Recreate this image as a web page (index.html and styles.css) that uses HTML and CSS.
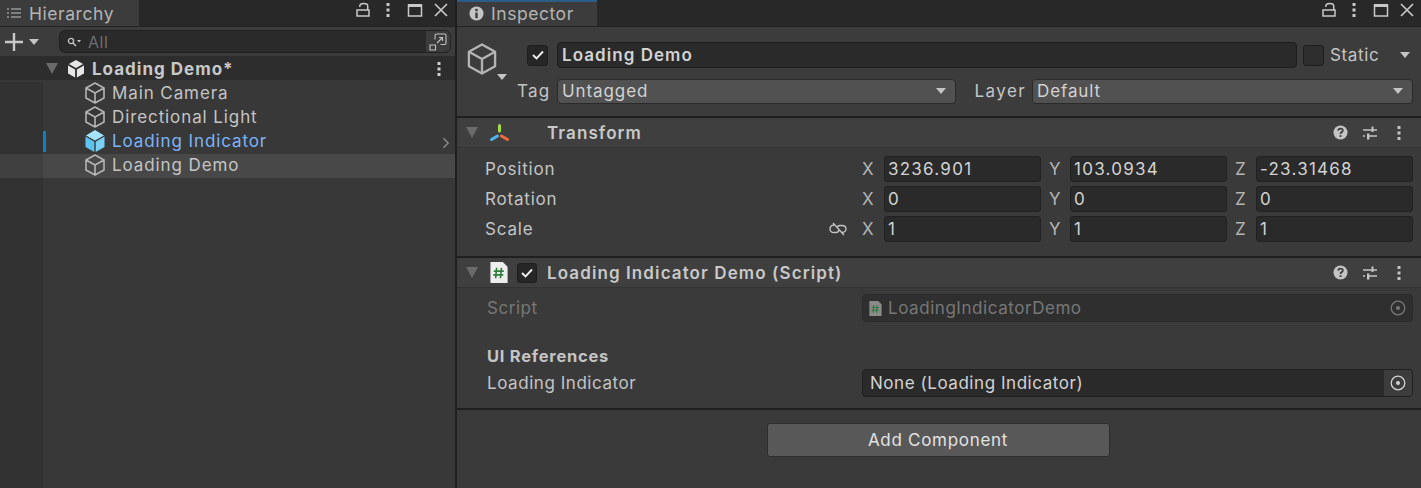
FILE: index.html
```html
<!DOCTYPE html>
<html>
<head>
  <meta charset="UTF-8" />
  <title>Hierarchy / Inspector</title>
  <link rel="stylesheet" href="styles.css">
</head>
<body>

<svg class="defs" width="0" height="0">
  <symbol id="cube" viewBox="0 0 22 24">
    <path d="M11 2 L20 7 V17 L11 22 L2 17 V7 Z M2 7 L11 12 L20 7 M11 12 V22" fill="none" stroke="currentColor" stroke-width="1.6" stroke-linejoin="round"/>
  </symbol>
  <symbol id="lock" viewBox="0 0 16 16">
    <path d="M2 8 H14 V14 H2 Z M12.7 8 V4 Q12.7 1.5 8.7 1.5 Q5 1.5 4.8 4 V5" fill="none" stroke="currentColor" stroke-width="1.5"/>
  </symbol>
  <symbol id="max" viewBox="0 0 16 16">
    <path d="M1.5 3 H14.5 V14 H1.5 Z" fill="none" stroke="currentColor" stroke-width="1.5"/>
    <rect x="1" y="2" width="14" height="3" fill="currentColor"/>
  </symbol>
  <symbol id="close" viewBox="0 0 16 16">
    <path d="M2 2 L14 14 M14 2 L2 14" stroke="currentColor" stroke-width="1.7"/>
  </symbol>
  <symbol id="dots" viewBox="0 0 4 16">
    <rect x="0.5" y="1" width="3" height="3" fill="currentColor"/>
    <rect x="0.5" y="6.5" width="3" height="3" fill="currentColor"/>
    <rect x="0.5" y="12" width="3" height="3" fill="currentColor"/>
  </symbol>
  <symbol id="help" viewBox="0 0 16 16">
    <circle cx="8" cy="8" r="7.5" fill="currentColor"/>
    <path d="M5.5 6 Q5.6 3.8 8 3.8 Q10.5 3.8 10.5 5.8 Q10.5 7 9.2 7.6 Q8 8.2 8 9.6" fill="none" stroke="#3e3e3e" stroke-width="1.8"/>
    <rect x="7" y="10.8" width="2" height="2" fill="#3e3e3e"/>
  </symbol>
  <symbol id="sliders" viewBox="0 0 16 16">
    <path d="M1 5 H15 M1 11 H3 M6 11 H15" stroke="currentColor" stroke-width="1.4"/>
    <rect x="9.5" y="1.5" width="2" height="5.5" fill="currentColor"/>
    <rect x="5" y="8.5" width="2.4" height="6" fill="currentColor"/>
  </symbol>
  <symbol id="target" viewBox="0 0 16 16">
    <circle cx="8" cy="8" r="6.8" fill="none" stroke="currentColor" stroke-width="1.3"/>
    <circle cx="8" cy="8" r="2" fill="currentColor"/>
  </symbol>
  <symbol id="script" viewBox="0 0 18 22">
    <path d="M0 0 H13 L18 5 V22 H0 Z" fill="currentColor"/>
    <path d="M6.5 6 L5.5 17 M11.5 6 L10.5 17 M3.5 9.5 H14 M3 13.5 H13.5" stroke="#2f7d3a" stroke-width="1.7" fill="none"/>
  </symbol>
</svg>

<div class="editor">

  <div class="panel hierarchy">
    <div class="tabbar">
      <div class="tab tab-h">
        <svg class="tab-list" width="14" height="12" viewBox="0 0 14 12"><path d="M4 2 H14 M4 6 H14 M4 10 H14" stroke="#c4c4c4" stroke-width="1.2"/><path d="M0 2 H2 M0 6 H2 M0 10 H2" stroke="#c4c4c4" stroke-width="1.2"/></svg>
        <span>Hierarchy</span>
      </div>
      <div class="tab-tools">
        <svg class="ico-lock"><use href="#lock"/></svg>
        <svg class="ico-dots"><use href="#dots"/></svg>
        <svg class="ico-max"><use href="#max"/></svg>
        <svg class="ico-close"><use href="#close"/></svg>
      </div>
    </div>

    <div class="toolbar">
      <div class="add">
        <svg width="18" height="18" viewBox="0 0 18 18"><path d="M9 0 V18 M0 9 H18" stroke="#c8c8c8" stroke-width="2.4"/></svg>
        <i class="caret"></i>
      </div>
      <div class="search">
        <svg width="14" height="10" viewBox="0 0 14 10"><circle cx="4" cy="4" r="2.6" fill="none" stroke="#c4c4c4" stroke-width="1.3"/><path d="M6 6 L9 9" stroke="#c4c4c4" stroke-width="1.5"/><path d="M10 3 H14 L12 5.5 Z" fill="#c4c4c4"/></svg>
        <span>All</span>
        <div class="search-btn">
          <svg width="18" height="18" viewBox="0 0 18 18"><path d="M6 6.5 V2.5 Q6 1 7.5 1 H16 Q17 1 17 2.5 V10 Q17 11.5 15.5 11.5 H11.5 M1 12 H6.5 V17 H1 Z M8 10 L13.5 4.5 M10 4.5 H13.5 V8" fill="none" stroke="#c0c0c0" stroke-width="1.1"/></svg>
        </div>
      </div>
    </div>

    <div class="scene-row">
      <i class="fold"></i>
      <svg class="scene-ico" width="20" height="20" viewBox="0 0 20 20"><path d="M10 1 L18 5.5 V14.5 L10 19 L2 14.5 V5.5 Z" fill="#e6e6e6"/><path d="M10 10 V19 M10 10 L2 5.5 M10 10 L18 5.5" stroke="#2d2d2d" stroke-width="1.8"/></svg>
      <span class="scene-name">Loading Demo*</span>
      <svg class="ico-dots scene-dots"><use href="#dots"/></svg>
    </div>

    <div class="tree">
      <div class="row"><svg class="cube"><use href="#cube"/></svg><span>Main Camera</span></div>
      <div class="row"><svg class="cube"><use href="#cube"/></svg><span>Directional Light</span></div>
      <div class="row prefab">
        <i class="changed"></i>
        <svg class="cube" viewBox="0 0 22 24"><path d="M11 1 L20 6.5 L11 11.5 L2 6.5 Z" fill="#a5e3fb"/><path d="M1.5 7.5 L10.3 12.7 V23 L1.5 18 Z" fill="#5cc3f2"/><path d="M20.5 7.5 L11.7 12.7 V23 L20.5 18 Z" fill="#7ad0f7"/></svg>
        <span>Loading Indicator</span>
        <svg class="chev" width="8" height="12" viewBox="0 0 9 14"><path d="M1.5 1.5 L7 7 L1.5 12.5" fill="none" stroke="#8a8a8a" stroke-width="1.7"/></svg>
      </div>
      <div class="row selected"><svg class="cube"><use href="#cube"/></svg><span>Loading Demo</span></div>
    </div>
  </div>

  <div class="panel inspector">
    <div class="tabbar">
      <div class="tab tab-i">
        <svg width="15" height="15" viewBox="0 0 16 16"><circle cx="8" cy="8" r="7.5" fill="#c4c4c4"/><rect x="6.7" y="3" width="2.6" height="2.6" fill="#3c3c3c"/><rect x="6.7" y="7" width="2.6" height="6" fill="#3c3c3c"/></svg>
        <span>Inspector</span>
      </div>
      <div class="tab-tools">
        <svg class="ico-lock"><use href="#lock"/></svg>
        <svg class="ico-dots"><use href="#dots"/></svg>
        <svg class="ico-max"><use href="#max"/></svg>
        <svg class="ico-close"><use href="#close"/></svg>
      </div>
    </div>

    <div class="go-head">
      <div class="go-icon">
        <svg class="big-cube"><use href="#cube"/></svg>
        <i class="caret caret-go"></i>
      </div>
      <div class="go-fields">
        <div class="go-row">
          <div class="check"><svg width="12" height="10" viewBox="0 0 12 10"><path d="M1 5 L4.5 8.5 L11 1.5" fill="none" stroke="#eee" stroke-width="1.9"/></svg></div>
          <div class="name-input">Loading Demo</div>
          <div class="check static-box"></div>
          <span class="static-label">Static</span>
          <i class="caret caret-static"></i>
        </div>
        <div class="go-row second">
          <span class="tag-label">Tag</span>
          <div class="dropdown tag-drop">Untagged<i class="caret"></i></div>
          <span class="layer-label">Layer</span>
          <div class="dropdown layer-drop">Default<i class="caret"></i></div>
        </div>
      </div>
    </div>

    <div class="comp-head">
      <i class="fold"></i>
      <svg class="comp-ico" width="20" height="20" viewBox="0 0 20 20"><path d="M10.5 2.5 V8" stroke="#a5dc4a" stroke-width="3" stroke-linecap="round"/><path d="M8.5 13 L2.5 16.5" stroke="#52b4ee" stroke-width="3" stroke-linecap="round"/><path d="M12.5 13 L18.5 16.5" stroke="#ee6c3a" stroke-width="3" stroke-linecap="round"/></svg>
      <span class="comp-spacer"></span>
      <span class="comp-title">Transform</span>
      <div class="comp-tools">
        <svg class="ico-help"><use href="#help"/></svg>
        <svg class="ico-sliders"><use href="#sliders"/></svg>
        <svg class="ico-dots"><use href="#dots"/></svg>
      </div>
    </div>

    <div class="transform">
      <div class="vec-row">
        <span class="prop">Position</span>
        <div class="vec">
          <span class="axis">X</span><div class="num">3236.901</div>
          <span class="axis">Y</span><div class="num">103.0934</div>
          <span class="axis">Z</span><div class="num">-23.31468</div>
        </div>
      </div>
      <div class="vec-row">
        <span class="prop">Rotation</span>
        <div class="vec">
          <span class="axis">X</span><div class="num">0</div>
          <span class="axis">Y</span><div class="num">0</div>
          <span class="axis">Z</span><div class="num">0</div>
        </div>
      </div>
      <div class="vec-row">
        <span class="prop">Scale</span>
        <svg class="link" width="18" height="14" viewBox="0 0 18 14"><path d="M5 3 Q1 3.5 1 7 Q1 10.5 5 10.5 H7 Q9.5 10.5 10 8 M13 10.5 Q17 10 17 7 Q17 3.5 13 3.5 H11 Q8.5 3.5 8 6 M4 1 L15 13" fill="none" stroke="#c4c4c4" stroke-width="1.3"/></svg>
        <div class="vec">
          <span class="axis">X</span><div class="num">1</div>
          <span class="axis">Y</span><div class="num">1</div>
          <span class="axis">Z</span><div class="num">1</div>
        </div>
      </div>
    </div>

    <div class="comp-head script-head">
      <i class="fold"></i>
      <svg class="script-ico"><use href="#script"/></svg>
      <div class="check small"><svg width="12" height="10" viewBox="0 0 12 10"><path d="M1 5 L4.5 8.5 L11 1.5" fill="none" stroke="#eee" stroke-width="1.9"/></svg></div>
      <span class="comp-title">Loading Indicator Demo (Script)</span>
      <div class="comp-tools">
        <svg class="ico-help"><use href="#help"/></svg>
        <svg class="ico-sliders"><use href="#sliders"/></svg>
        <svg class="ico-dots"><use href="#dots"/></svg>
      </div>
    </div>

    <div class="script-body">
      <div class="obj-row disabled">
        <span class="prop2">Script</span>
        <div class="obj-field">
          <svg class="mini-script"><use href="#script"/></svg>
          <span>LoadingIndicatorDemo</span>
          <svg class="ico-target"><use href="#target"/></svg>
        </div>
      </div>
      <div class="group-label">UI References</div>
      <div class="obj-row">
        <span class="prop2">Loading Indicator</span>
        <div class="obj-field active">
          <span>None (Loading Indicator)</span>
          <div class="target-btn"><svg class="ico-target"><use href="#target"/></svg></div>
        </div>
      </div>
    </div>

    <div class="add-wrap">
      <div class="add-btn">Add Component</div>
    </div>
  </div>

</div>

</body>
</html>
```

FILE: styles.css
```css
* {
  box-sizing: border-box;
}

html, body {
  margin: 0;
  height: 100%;
  overflow: hidden;
}

body {
  font-family: Inter, "Noto Sans", sans-serif;
  font-size: 17px;
  letter-spacing: 0.55px;
  color: #c4c4c4;
  background: #1f1f1f;
}

.defs {
  position: absolute;
}

i {
  display: block;
}

.editor {
  display: flex;
  height: 488px;
}

.panel {
  display: flex;
  flex-direction: column;
  height: 100%;
}

.hierarchy {
  width: 455px;
  flex: none;
  background: #383838;
}

.inspector {
  flex: 1;
  margin-left: 2px;
  background: #3a3a3a;
  min-width: 0;
}

.tabbar {
  display: flex;
  justify-content: space-between;
  height: 27px;
  flex: none;
  background: #282828;
  border-bottom: 1px solid #232323;
}

.tab {
  display: flex;
  align-items: center;
  background: #3c3c3c;
  height: 26px;
  color: #b4b4b4;
  font-size: 17.5px;
  letter-spacing: 0.55px;
}

.tab-h {
  width: 139px;
  padding-left: 7px;
  gap: 8px;
}

.tab-i {
  width: 140px;
  padding: 0 0 2px 12px;
  gap: 7px;
  border-top: 2px solid #2c5d87;
}

.tab-tools {
  display: flex;
  align-items: center;
  height: 19px;
  padding-right: 6px;
  color: #c8c8c8;
}

.ico-lock {
  width: 16px;
  height: 16px;
}

.ico-dots {
  width: 4px;
  height: 16px;
}

.ico-max {
  width: 16px;
  height: 16px;
}

.ico-close {
  width: 16px;
  height: 16px;
}

.tab-tools .ico-dots {
  margin: 0 17px 0 15px;
}

.tab-tools .ico-close {
  margin-left: 10px;
}

.toolbar {
  display: flex;
  align-items: center;
  height: 29px;
  padding: 0 4px 0 5px;
  background: #3c3c3c;
}

.add {
  display: flex;
  align-items: center;
  width: 54px;
  gap: 6px;
  flex: none;
}

.caret {
  width: 0;
  height: 0;
  border-left: 5.5px solid transparent;
  border-right: 5.5px solid transparent;
  border-top: 6.5px solid #c4c4c4;
}

.search {
  flex: 1;
  display: flex;
  align-items: center;
  height: 23px;
  padding-left: 7px;
  gap: 7px;
  background: #2a2a2a;
  border: 1px solid #222;
  border-radius: 6px;
  color: #6e6e6e;
  font-size: 16px;
  overflow: hidden;
}

.search-btn {
  margin-left: auto;
  width: 24px;
  height: 100%;
  background: #3c3c3c;
  display: flex;
  align-items: center;
  justify-content: center;
}

.scene-row {
  display: flex;
  align-items: center;
  height: 26px;
  padding: 1px 14px 0 46px;
  background: #2d2d2d;
  border-bottom: 2px solid #383838;
  color: #c8c8c8;
  font-weight: 700;
  letter-spacing: 1px;
}

.fold {
  width: 0;
  height: 0;
  border-left: 6.5px solid transparent;
  border-right: 6.5px solid transparent;
  border-top: 11px solid #6a6a6a;
  flex: none;
}

.scene-ico {
  margin-left: 8px;
  flex: none;
}

.scene-name {
  margin-left: 6px;
}

.scene-dots {
  margin-left: auto;
  color: #d0d0d0;
}

.tree {
  flex: 1;
  background: linear-gradient(to right, #323232 43px, #383838 43px);
}

.row {
  position: relative;
  display: flex;
  align-items: center;
  height: 24px;
  padding: 0 0 2px 84px;
  gap: 6px;
  color: #c4c4c4;
  letter-spacing: 0.9px;
}

.cube {
  width: 22px;
  height: 24px;
  color: #b4b4b4;
  flex: none;
}

.prefab {
  color: #7cb4f8;
}

.changed {
  position: absolute;
  left: 43px;
  top: 1px;
  width: 3px;
  height: 21px;
  background: #0f80be;
}

.chev {
  margin: 4px 5px 0 auto;
}

.selected {
  background: linear-gradient(to right, #404040 43px, #484848 43px);
}

.go-head {
  display: flex;
  height: 91px;
  flex: none;
  padding-top: 15px;
  background: #3c3c3c;
  border-bottom: 2px solid #1f1f1f;
}

.go-icon {
  position: relative;
  width: 60px;
  padding-left: 9px;
  flex: none;
}

.big-cube {
  width: 32px;
  height: 36px;
  margin-top: -1px;
  color: #b4b4b4;
}

.caret-go {
  position: absolute;
  left: 40px;
  top: 32px;
}

.go-fields {
  flex: 1;
  padding-right: 8px;
  min-width: 0;
}

.go-row {
  display: flex;
  align-items: center;
  height: 26px;
}

.second {
  margin-top: 10px;
}

.check {
  width: 21px;
  height: 21px;
  background: #262626;
  border: 1px solid #1e1e1e;
  border-radius: 3px;
  display: flex;
  align-items: center;
  justify-content: center;
  flex: none;
  margin-left: 10px;
}

.name-input {
  flex: 1;
  height: 26px;
  margin-left: 9px;
  padding-left: 4px;
  background: #2a2a2a;
  border: 1px solid #1e1e1e;
  border-radius: 4px;
  line-height: 24px;
  font-weight: 600;
  letter-spacing: 1.05px;
  color: #d2d2d2;
}

.static-box {
  margin-left: 6px;
  background: #2e2e2e;
}

.static-label {
  margin-left: 6px;
  width: 70px;
  letter-spacing: 0.65px;
  flex: none;
}

.caret-static {
  margin-right: 3px;
}

.tag-label {
  width: 40px;
  letter-spacing: 1.3px;
  flex: none;
}

.dropdown {
  display: flex;
  align-items: center;
  justify-content: space-between;
  height: 25px;
  padding: 0 9px 0 4px;
  background: #515151;
  border: 1px solid #2a2a2a;
  border-radius: 4px;
  color: #d2d2d2;
  letter-spacing: 0.9px;
}

.tag-drop {
  width: 399px;
  flex: none;
}

.layer-label {
  width: 76px;
  text-align: right;
  padding-right: 6px;
  letter-spacing: 1.4px;
  flex: none;
}

.layer-drop {
  flex: 1;
}

.comp-head {
  display: flex;
  align-items: center;
  height: 30px;
  flex: none;
  padding-left: 9px;
  padding-right: 20px;
  background: #3f3f3f;
  border-bottom: 1px solid #333;
  color: #c8c8c8;
}

.comp-ico {
  margin-left: 11px;
}

.comp-spacer {
  width: 28px;
}

.comp-title {
  margin-left: 10px;
  font-weight: 600;
  letter-spacing: 1.1px;
}

.comp-tools {
  display: flex;
  align-items: center;
  margin-left: auto;
  color: #c4c4c4;
}

.ico-help {
  width: 15px;
  height: 15px;
}

.ico-sliders {
  width: 16px;
  height: 16px;
  margin-left: 14px;
}

.comp-tools .ico-dots {
  margin-left: 19px;
}

.transform {
  height: 110px;
  flex: none;
  padding-top: 6px;
  background: #3a3a3a;
  border-bottom: 2px solid #1f1f1f;
}

.vec-row {
  position: relative;
  display: flex;
  align-items: center;
  height: 30px;
  padding-left: 28px;
  padding-right: 8px;
}

.prop {
  flex: none;
  letter-spacing: 0.8px;
}

.link {
  position: absolute;
  left: 372px;
  top: 8px;
}

.vec {
  margin-left: auto;
  width: 552px;
  display: grid;
  grid-template-columns: 23px 157px 29px 157px 29px 157px;
  align-items: center;
}

.axis {
  padding-left: 8px;
  color: #b4b4b4;
}

.axis:first-child {
  padding-left: 1px;
}

.num {
  height: 26px;
  padding-left: 3px;
  background: #2a2a2a;
  border: 1px solid #212121;
  border-radius: 3px;
  line-height: 24px;
  letter-spacing: 1.25px;
  color: #d2d2d2;
}

.script-head .script-ico {
  width: 18px;
  height: 21px;
  margin-left: 12px;
  color: #eeeeee;
  flex: none;
}

.check.small {
  width: 20px;
  height: 20px;
  margin-left: 9px;
}

.script-body {
  height: 122px;
  flex: none;
  padding-top: 6px;
  border-bottom: 2px solid #1f1f1f;
}

.obj-row {
  display: flex;
  align-items: center;
  height: 28px;
  padding-left: 30px;
  padding-right: 8px;
}

.prop2 {
  width: 375px;
  flex: none;
}

.disabled {
  color: #777;
}

.group-label {
  margin: 21px 0 0 30px;
  height: 26px;
  line-height: 26px;
  font-weight: 700;
  font-size: 16.5px;
  color: #c4c4c4;
  letter-spacing: 0.75px;
}

.obj-field {
  flex: 1;
  display: flex;
  align-items: center;
  height: 28px;
  padding-left: 4px;
  background: #2f2f2f;
  border: 1px solid #2b2b2b;
  border-radius: 4px;
  overflow: hidden;
}

.mini-script {
  width: 13px;
  height: 15px;
  margin: 0 6px 0 2px;
  color: #8a8a8a;
  flex: none;
}

.obj-field > .ico-target {
  margin-left: auto;
  margin-right: 6px;
}

.ico-target {
  width: 16px;
  height: 16px;
}

.active {
  background: #2a2a2a;
  border-color: #212121;
  padding-left: 7px;
  color: #d2d2d2;
}

.target-btn {
  margin-left: auto;
  width: 28px;
  height: 100%;
  background: #3c3c3c;
  display: flex;
  align-items: center;
  justify-content: center;
  color: #d2d2d2;
}

.add-wrap {
  display: flex;
  justify-content: center;
  padding-top: 13px;
  padding-right: 2px;
}

.add-btn {
  width: 343px;
  height: 34px;
  background: #585858;
  border: 1px solid #2e2e2e;
  border-radius: 3px;
  text-align: center;
  line-height: 32px;
  letter-spacing: 0.7px;
  color: #e2e2e2;
}
```
